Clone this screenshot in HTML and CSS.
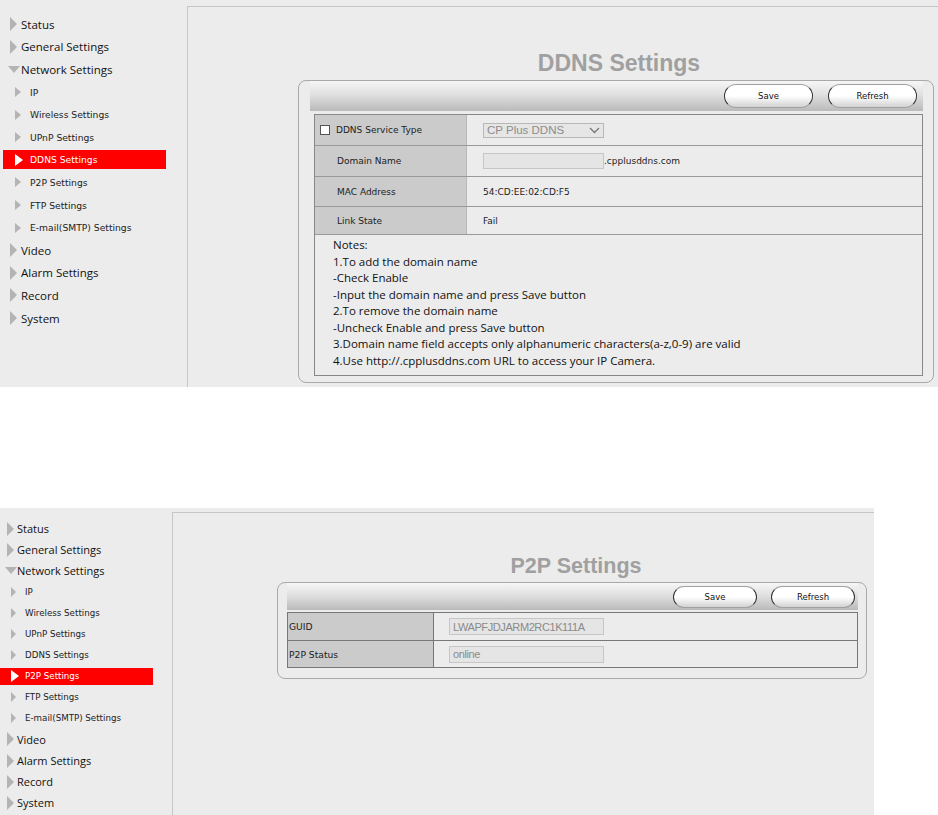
FILE: index.html
```html
<!DOCTYPE html>
<html lang="en">
<head>
    <meta charset="UTF-8">
    <meta name="viewport" content="width=device-width, initial-scale=1.0">
    <title>DDNS / P2P Settings</title>
    <link rel="stylesheet" href="styles.css">
</head>
<body>
    <div class="screen screen-ddns">
        <ul class="menu">
            <li class="menu-item"><a class="menu-link"><span class="arrow"></span>Status</a></li>
            <li class="menu-item"><a class="menu-link"><span class="arrow"></span>General Settings</a></li>
            <li class="menu-item open"><a class="menu-link"><span class="arrow"></span>Network Settings</a></li>
            <li class="menu-item sub"><a class="menu-link"><span class="arrow"></span>IP</a></li>
            <li class="menu-item sub"><a class="menu-link"><span class="arrow"></span>Wireless Settings</a></li>
            <li class="menu-item sub"><a class="menu-link"><span class="arrow"></span>UPnP Settings</a></li>
            <li class="menu-item sub active"><a class="menu-link"><span class="arrow"></span>DDNS Settings</a></li>
            <li class="menu-item sub"><a class="menu-link"><span class="arrow"></span>P2P Settings</a></li>
            <li class="menu-item sub"><a class="menu-link"><span class="arrow"></span>FTP Settings</a></li>
            <li class="menu-item sub"><a class="menu-link"><span class="arrow"></span>E-mail(SMTP) Settings</a></li>
            <li class="menu-item"><a class="menu-link"><span class="arrow"></span>Video</a></li>
            <li class="menu-item"><a class="menu-link"><span class="arrow"></span>Alarm Settings</a></li>
            <li class="menu-item"><a class="menu-link"><span class="arrow"></span>Record</a></li>
            <li class="menu-item"><a class="menu-link"><span class="arrow"></span>System</a></li>
        </ul>

        <div class="main">
            <h1 class="page-title">DDNS Settings</h1>
            <div class="panel">
                <div class="panel-bar">
                    <button class="button">Save</button>
                    <button class="button">Refresh</button>
                </div>
                <div class="grid">
                    <div class="row">
                        <div class="label label-check"><span class="checkbox"></span>DDNS Service Type</div>
                        <div class="value">
                            <div class="select">
                                <span>CP Plus DDNS</span>
                                <svg width="11" height="7" viewBox="0 0 11 7"><path d="M1 1 L5.5 5.5 L10 1" fill="none" stroke="#777" stroke-width="1.3"/></svg>
                            </div>
                        </div>
                    </div>
                    <div class="row">
                        <div class="label">Domain Name</div>
                        <div class="value"><span class="field"></span>.cpplusddns.com</div>
                    </div>
                    <div class="row row-short">
                        <div class="label">MAC Address</div>
                        <div class="value">54:CD:EE:02:CD:F5</div>
                    </div>
                    <div class="row row-shorter">
                        <div class="label">Link State</div>
                        <div class="value">Fail</div>
                    </div>
                    <div class="notes">
                        <p>Notes:</p>
                        <p>1.To add the domain name</p>
                        <p>-Check Enable</p>
                        <p>-Input the domain name and press Save button</p>
                        <p>2.To remove the domain name</p>
                        <p>-Uncheck Enable and press Save button</p>
                        <p>3.Domain name field accepts only alphanumeric characters(a-z,0-9) are valid</p>
                        <p>4.Use http://.cpplusddns.com URL to access your IP Camera.</p>
                    </div>
                </div>
            </div>
        </div>
    </div>

    <div class="screen screen-p2p">
        <ul class="menu">
            <li class="menu-item"><a class="menu-link"><span class="arrow"></span>Status</a></li>
            <li class="menu-item"><a class="menu-link"><span class="arrow"></span>General Settings</a></li>
            <li class="menu-item open"><a class="menu-link"><span class="arrow"></span>Network Settings</a></li>
            <li class="menu-item sub"><a class="menu-link"><span class="arrow"></span>IP</a></li>
            <li class="menu-item sub"><a class="menu-link"><span class="arrow"></span>Wireless Settings</a></li>
            <li class="menu-item sub"><a class="menu-link"><span class="arrow"></span>UPnP Settings</a></li>
            <li class="menu-item sub"><a class="menu-link"><span class="arrow"></span>DDNS Settings</a></li>
            <li class="menu-item sub active"><a class="menu-link"><span class="arrow"></span>P2P Settings</a></li>
            <li class="menu-item sub"><a class="menu-link"><span class="arrow"></span>FTP Settings</a></li>
            <li class="menu-item sub"><a class="menu-link"><span class="arrow"></span>E-mail(SMTP) Settings</a></li>
            <li class="menu-item"><a class="menu-link"><span class="arrow"></span>Video</a></li>
            <li class="menu-item"><a class="menu-link"><span class="arrow"></span>Alarm Settings</a></li>
            <li class="menu-item"><a class="menu-link"><span class="arrow"></span>Record</a></li>
            <li class="menu-item"><a class="menu-link"><span class="arrow"></span>System</a></li>
        </ul>

        <div class="main">
            <h1 class="page-title">P2P Settings</h1>
            <div class="panel">
                <div class="panel-bar">
                    <button class="button">Save</button>
                    <button class="button">Refresh</button>
                </div>
                <div class="grid">
                    <div class="row">
                        <div class="label">GUID</div>
                        <div class="value"><span class="field">LWAPFJDJARM2RC1K111A</span></div>
                    </div>
                    <div class="row">
                        <div class="label">P2P Status</div>
                        <div class="value"><span class="field">online</span></div>
                    </div>
                </div>
            </div>
        </div>
    </div>
</body>
</html>
```

FILE: styles.css
```css
* {
    margin: 0;
    padding: 0;
    box-sizing: border-box;
}

body {
    background: #fff;
    font-family: 'DejaVu Sans', sans-serif;
}

.screen {
    display: flex;
    background: #ececec;
    overflow: hidden;
}

.screen-ddns {
    width: 938px;
    height: 387px;
}

.screen-p2p {
    width: 874px;
    height: 307px;
    margin-top: 121px;
}

/* side menu */

.menu {
    list-style: none;
    flex: none;
}

.screen-ddns .menu {
    width: 187px;
    padding-top: 13px;
}

.screen-p2p .menu {
    width: 172px;
    padding-top: 10px;
}

.menu-item {
    display: flex;
    align-items: center;
}

.screen-ddns .menu-item {
    height: 22.6px;
}

.screen-p2p .menu-item {
    height: 21.1px;
}

.menu-link {
    display: flex;
    align-items: center;
    width: 100%;
    color: #111;
    font-family: 'Open Sans', sans-serif;
    white-space: nowrap;
}

.screen-ddns .menu-link {
    height: 19px;
    padding-left: 10px;
    font-size: 11.5px;
}

.screen-p2p .menu-link {
    height: 17px;
    padding-left: 7px;
    font-size: 11px;
}

.arrow {
    flex: none;
    width: 0;
    height: 0;
    border-left: 7px solid #b4b4b4;
    border-top: 7px solid transparent;
    border-bottom: 7px solid transparent;
    margin-right: 4px;
}

.screen-p2p .arrow {
    margin-right: 3px;
}

.open .arrow,
.screen-p2p .open .arrow {
    border-left: 6px solid transparent;
    border-right: 6px solid transparent;
    border-top: 7px solid #b4b4b4;
    border-bottom: 0;
    margin-left: -2px;
    margin-right: 1px;
}

.screen-p2p .open .arrow {
    margin-right: 0;
}

.sub .menu-link {
    font-family: 'DejaVu Sans', sans-serif;
    color: #222;
}

.screen-ddns .sub .menu-link {
    padding-left: 15px;
    font-size: 9.2px;
}

.screen-p2p .sub .menu-link {
    padding-left: 11px;
    font-size: 8.7px;
}

.sub .arrow,
.screen-p2p .sub .arrow {
    border-left-width: 6px;
    border-top-width: 5px;
    border-bottom-width: 5px;
    margin-right: 9px;
}

.screen-p2p .sub .arrow {
    border-left-width: 5px;
}

.active .menu-link {
    background: #ff0000;
    color: #fff;
}

.screen-ddns .active .menu-link {
    width: 163px;
    margin-left: 3px;
    padding-left: 12px;
}

.screen-p2p .active .menu-link {
    width: 153px;
    padding-left: 11px;
}

.active .arrow,
.screen-p2p .active .arrow {
    border-left: 8px solid #fff;
    border-top-width: 6px;
    border-bottom-width: 6px;
    margin-right: 7px;
}

.screen-p2p .active .arrow {
    margin-right: 6px;
}

/* content */

.main {
    flex: 1;
    border-left: 1px solid #c6c6c6;
    border-top: 1px solid #c6c6c6;
}

.screen-ddns .main {
    margin-top: 6px;
    padding-left: 110px;
}

.screen-p2p .main {
    margin-top: 4px;
    padding-left: 104px;
}

.page-title {
    text-align: center;
    font-family: 'Liberation Sans', Arial, sans-serif;
    font-weight: bold;
    color: #a0a0a0;
}

.screen-ddns .page-title {
    width: 636px;
    padding-left: 6px;
    font-size: 23px;
    line-height: 26px;
    margin-top: 43px;
    margin-bottom: 4px;
}

.screen-p2p .page-title {
    width: 590px;
    padding-left: 8px;
    font-size: 21.5px;
    line-height: 24px;
    margin-top: 41px;
    margin-bottom: 4px;
}

.panel {
    border: 1px solid #a9a9a9;
    border-radius: 8px;
}

.screen-ddns .panel {
    width: 636px;
    padding: 0 10px 6px 11px;
}

.screen-p2p .panel {
    width: 590px;
    padding: 0 8px 10px 9px;
}

.panel-bar {
    display: flex;
    justify-content: flex-end;
    align-items: center;
    background: linear-gradient(to bottom, #f6f6f6 0%, #e0e0e0 45%, #bababa 100%);
}

.screen-ddns .panel-bar {
    height: 30px;
    padding-right: 6px;
    gap: 15px;
}

.screen-p2p .panel-bar {
    height: 27px;
    padding-right: 3px;
    gap: 14px;
}

.button {
    font-family: 'DejaVu Sans', sans-serif;
    font-size: 8.5px;
    color: #111;
    background: linear-gradient(to bottom, #ffffff 0%, #ffffff 50%, #d2d2d2 100%);
    border: 1px solid #a0a0a0;
    border-left-color: #333;
    border-right-color: #333;
    border-radius: 12px;
    cursor: pointer;
}

.screen-ddns .button {
    width: 89px;
    height: 24px;
}

.screen-p2p .button {
    width: 84px;
    height: 22px;
    border-radius: 11px;
}

/* settings grid */

.grid {
    border: 1px solid #888;
}

.screen-ddns .grid {
    margin: 3px 0 0 4px;
}

.screen-p2p .grid {
    margin-top: 2px;
    border-color: #777;
}

.row {
    display: flex;
    border-bottom: 1px solid #999;
    font-size: 9px;
    color: #222;
}

.screen-ddns .row {
    height: 31px;
}

.screen-ddns .row-short {
    height: 30px;
}

.screen-ddns .row-shorter {
    height: 28px;
}

.screen-p2p .row {
    height: 28px;
    border-color: #777;
}

.screen-p2p .row:last-child {
    height: 26px;
    border-bottom: 0;
}

.label {
    flex: none;
    display: flex;
    align-items: center;
    background: #cbcbcb;
    border-right: 1px solid #b8b8b8;
}

.screen-ddns .label {
    width: 152px;
    padding-left: 22px;
}

.screen-ddns .label-check {
    padding-left: 5px;
}

.screen-p2p .label {
    width: 146px;
    padding-left: 1px;
    border-right-color: #777;
    font-size: 9.2px;
}

.value {
    flex: 1;
    display: flex;
    align-items: center;
}

.screen-ddns .value {
    padding-left: 16px;
}

.screen-p2p .value {
    padding-left: 15px;
}

.checkbox {
    width: 10px;
    height: 10px;
    border: 1px solid #555;
    background: #fff;
    margin-right: 6px;
}

.select {
    display: flex;
    align-items: center;
    justify-content: space-between;
    width: 121px;
    height: 15px;
    padding: 0 3px 0 3px;
    border: 1px solid #b8b8b8;
    background: #e6e6e6;
    color: #8c8c8c;
    font-family: 'Liberation Sans', Arial, sans-serif;
    font-size: 11.5px;
}

.field {
    display: flex;
    align-items: center;
    border: 1px solid #c6c6c6;
    background: #e5e5e5;
    color: #8a8a8a;
    font-family: 'Liberation Sans', Arial, sans-serif;
    font-size: 11px;
    letter-spacing: -0.4px;
}

.screen-ddns .field {
    width: 121px;
    height: 16px;
}

.screen-p2p .field {
    width: 155px;
    height: 17px;
    padding-left: 3px;
}

.notes {
    padding: 2px 0 6px 18px;
    font-family: 'Open Sans', sans-serif;
    font-size: 11.5px;
    line-height: 16.5px;
    color: #111;
}
```
